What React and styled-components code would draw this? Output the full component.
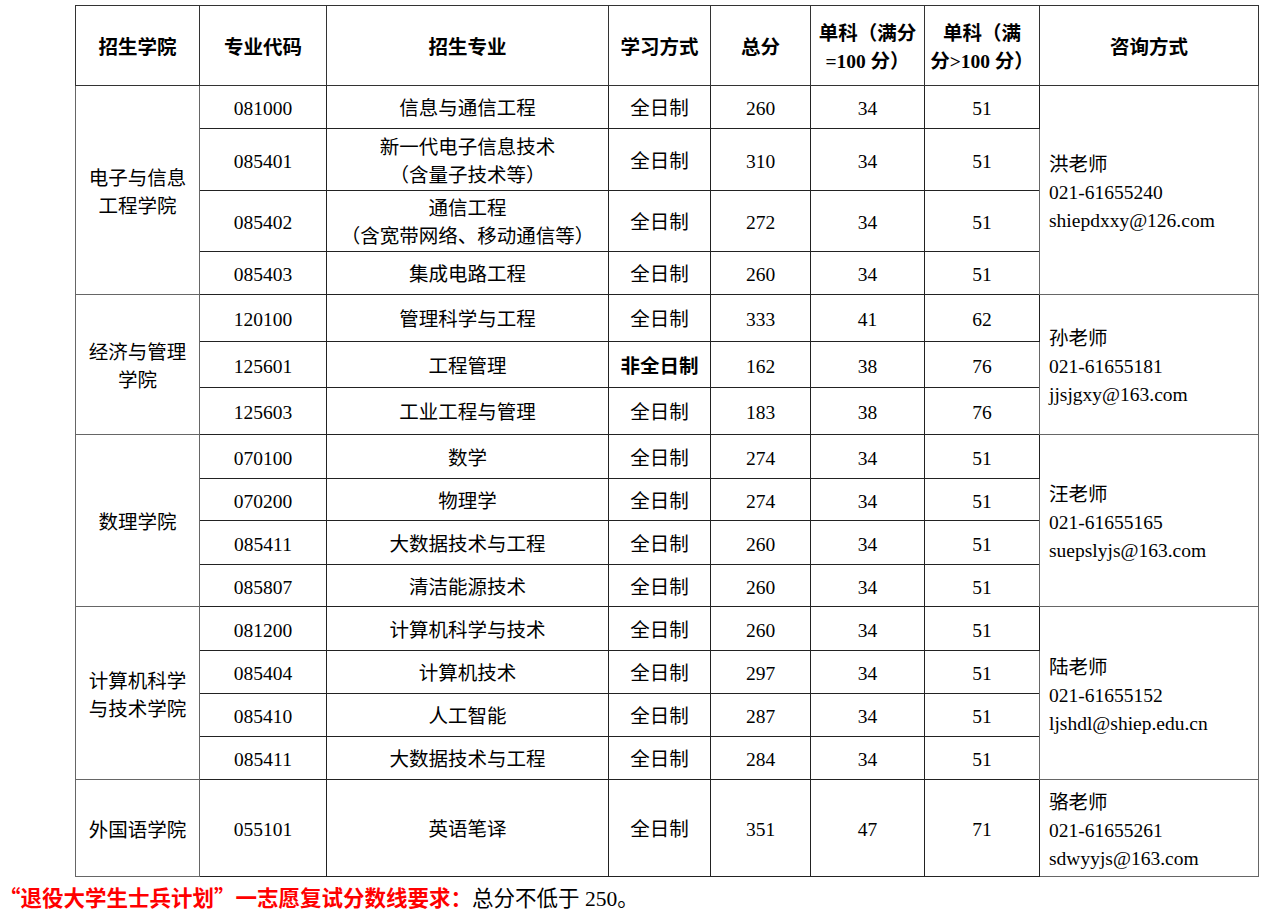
import React from "react";
import styled, { createGlobalStyle } from "styled-components";

const Global = createGlobalStyle`
  html, body { margin: 0; padding: 0; background: #fff; }
  body { font-family: "Liberation Serif", "Noto Sans CJK SC", serif; color: #000; }
`;

const Page = styled.div`
  padding: 5px 0 0 0;
  width: 1265px;
`;

const TableWrap = styled.div`
  padding-left: 75px;
`;

const Table = styled.table`
  border-collapse: collapse;
  table-layout: fixed;
  width: 1183px;
  border: 1px solid #666;
  font-size: 19.5px;
  line-height: 28px;
`;

const Th = styled.th`
  border: 1px solid #333;
  font-weight: 700;
  text-align: center;
  vertical-align: middle;
  padding: 4px 4px 0;
  font-family: "Liberation Serif", "Noto Sans CJK SC", serif;
`;

const Tr = styled.tr`
  height: ${(p) => p.$h}px;
`;

const Td = styled.td`
  border: 1px solid #222;
  border-top-color: ${(p) => (p.$groupStart ? "#666" : "#222")};
  text-align: center;
  vertical-align: middle;
  padding: 4px 0 0;
  font-weight: ${(p) => (p.$bold ? 700 : 400)};
`;

const CollegeTd = styled(Td)`
  border-color: #666;
  padding: 5px 6px 0;
`;

const ContactTd = styled(Td)`
  border-color: #666;
  text-align: left;
  padding: 5px 8px 0 9px;
`;

const Line = styled.div`
  white-space: nowrap;
`;

const Footer = styled.p`
  margin: 6px 0 0 -1px;
  font-size: 21.5px;
  line-height: 28px;
  white-space: nowrap;
`;

const RedNote = styled.span`
  color: #ff0000;
  font-weight: 700;
  font-family: "Noto Sans CJK SC", sans-serif;
`;

const groups = [
  {
    college: ["电子与信息", "工程学院"],
    contact: ["洪老师", "021-61655240", "shiepdxxy@126.com"],
    rows: [
      { h: 43, code: "081000", major: ["信息与通信工程"], mode: "全日制", total: 260, a: 34, b: 51 },
      { h: 62, code: "085401", major: ["新一代电子信息技术", "（含量子技术等）"], mode: "全日制", total: 310, a: 34, b: 51 },
      { h: 61, code: "085402", major: ["通信工程", "（含宽带网络、移动通信等）"], mode: "全日制", total: 272, a: 34, b: 51 },
      { h: 43, code: "085403", major: ["集成电路工程"], mode: "全日制", total: 260, a: 34, b: 51 },
    ],
  },
  {
    college: ["经济与管理", "学院"],
    contact: ["孙老师", "021-61655181", "jjsjgxy@163.com"],
    rows: [
      { h: 47, code: "120100", major: ["管理科学与工程"], mode: "全日制", total: 333, a: 41, b: 62 },
      { h: 46, code: "125601", major: ["工程管理"], mode: "非全日制", bold: true, total: 162, a: 38, b: 76 },
      { h: 47, code: "125603", major: ["工业工程与管理"], mode: "全日制", total: 183, a: 38, b: 76 },
    ],
  },
  {
    college: ["数理学院"],
    contact: ["汪老师", "021-61655165", "suepslyjs@163.com"],
    rows: [
      { h: 44, code: "070100", major: ["数学"], mode: "全日制", total: 274, a: 34, b: 51 },
      { h: 42, code: "070200", major: ["物理学"], mode: "全日制", total: 274, a: 34, b: 51 },
      { h: 44, code: "085411", major: ["大数据技术与工程"], mode: "全日制", total: 260, a: 34, b: 51 },
      { h: 42, code: "085807", major: ["清洁能源技术"], mode: "全日制", total: 260, a: 34, b: 51 },
    ],
  },
  {
    college: ["计算机科学", "与技术学院"],
    contact: ["陆老师", "021-61655152", "ljshdl@shiep.edu.cn"],
    rows: [
      { h: 44, code: "081200", major: ["计算机科学与技术"], mode: "全日制", total: 260, a: 34, b: 51 },
      { h: 43, code: "085404", major: ["计算机技术"], mode: "全日制", total: 297, a: 34, b: 51 },
      { h: 43, code: "085410", major: ["人工智能"], mode: "全日制", total: 287, a: 34, b: 51 },
      { h: 43, code: "085411", major: ["大数据技术与工程"], mode: "全日制", total: 284, a: 34, b: 51 },
    ],
  },
  {
    college: ["外国语学院"],
    contact: ["骆老师", "021-61655261", "sdwyyjs@163.com"],
    rows: [
      { h: 97, code: "055101", major: ["英语笔译"], mode: "全日制", total: 351, a: 47, b: 71 },
    ],
  },
];

const widths = [124, 127, 282, 102, 100, 114, 115, 219];

export default function App() {
  return (
    <>
      <Global />
      <Page>
        <TableWrap>
          <Table>
            <colgroup>
              {widths.map((w, i) => (
                <col key={i} style={{ width: w }} />
              ))}
            </colgroup>
            <thead>
              <Tr $h={80}>
                <Th>招生学院</Th>
                <Th>专业代码</Th>
                <Th>招生专业</Th>
                <Th>学习方式</Th>
                <Th>总分</Th>
                <Th>
                  <Line>单科（满分</Line>
                  <Line>=100 分）</Line>
                </Th>
                <Th>
                  <Line>单科（满</Line>
                  <Line>分&gt;100 分）</Line>
                </Th>
                <Th>咨询方式</Th>
              </Tr>
            </thead>
            <tbody>
              {groups.map((g, gi) =>
                g.rows.map((r, ri) => (
                  <Tr key={`${gi}-${ri}`} $h={r.h}>
                    {ri === 0 && (
                      <CollegeTd rowSpan={g.rows.length}>
                        {g.college.map((c) => (
                          <Line key={c}>{c}</Line>
                        ))}
                      </CollegeTd>
                    )}
                    <Td $groupStart={ri === 0}>{r.code}</Td>
                    <Td $groupStart={ri === 0}>
                      {r.major.map((m) => (
                        <Line key={m}>{m}</Line>
                      ))}
                    </Td>
                    <Td $groupStart={ri === 0} $bold={r.bold}>{r.mode}</Td>
                    <Td $groupStart={ri === 0}>{r.total}</Td>
                    <Td $groupStart={ri === 0}>{r.a}</Td>
                    <Td $groupStart={ri === 0}>{r.b}</Td>
                    {ri === 0 && (
                      <ContactTd rowSpan={g.rows.length}>
                        {g.contact.map((c) => (
                          <Line key={c}>{c}</Line>
                        ))}
                      </ContactTd>
                    )}
                  </Tr>
                ))
              )}
            </tbody>
          </Table>
        </TableWrap>
        <Footer>
          <RedNote>“退役大学生士兵计划”一志愿复试分数线要求：</RedNote>
          总分不低于 250。
        </Footer>
      </Page>
    </>
  );
}
